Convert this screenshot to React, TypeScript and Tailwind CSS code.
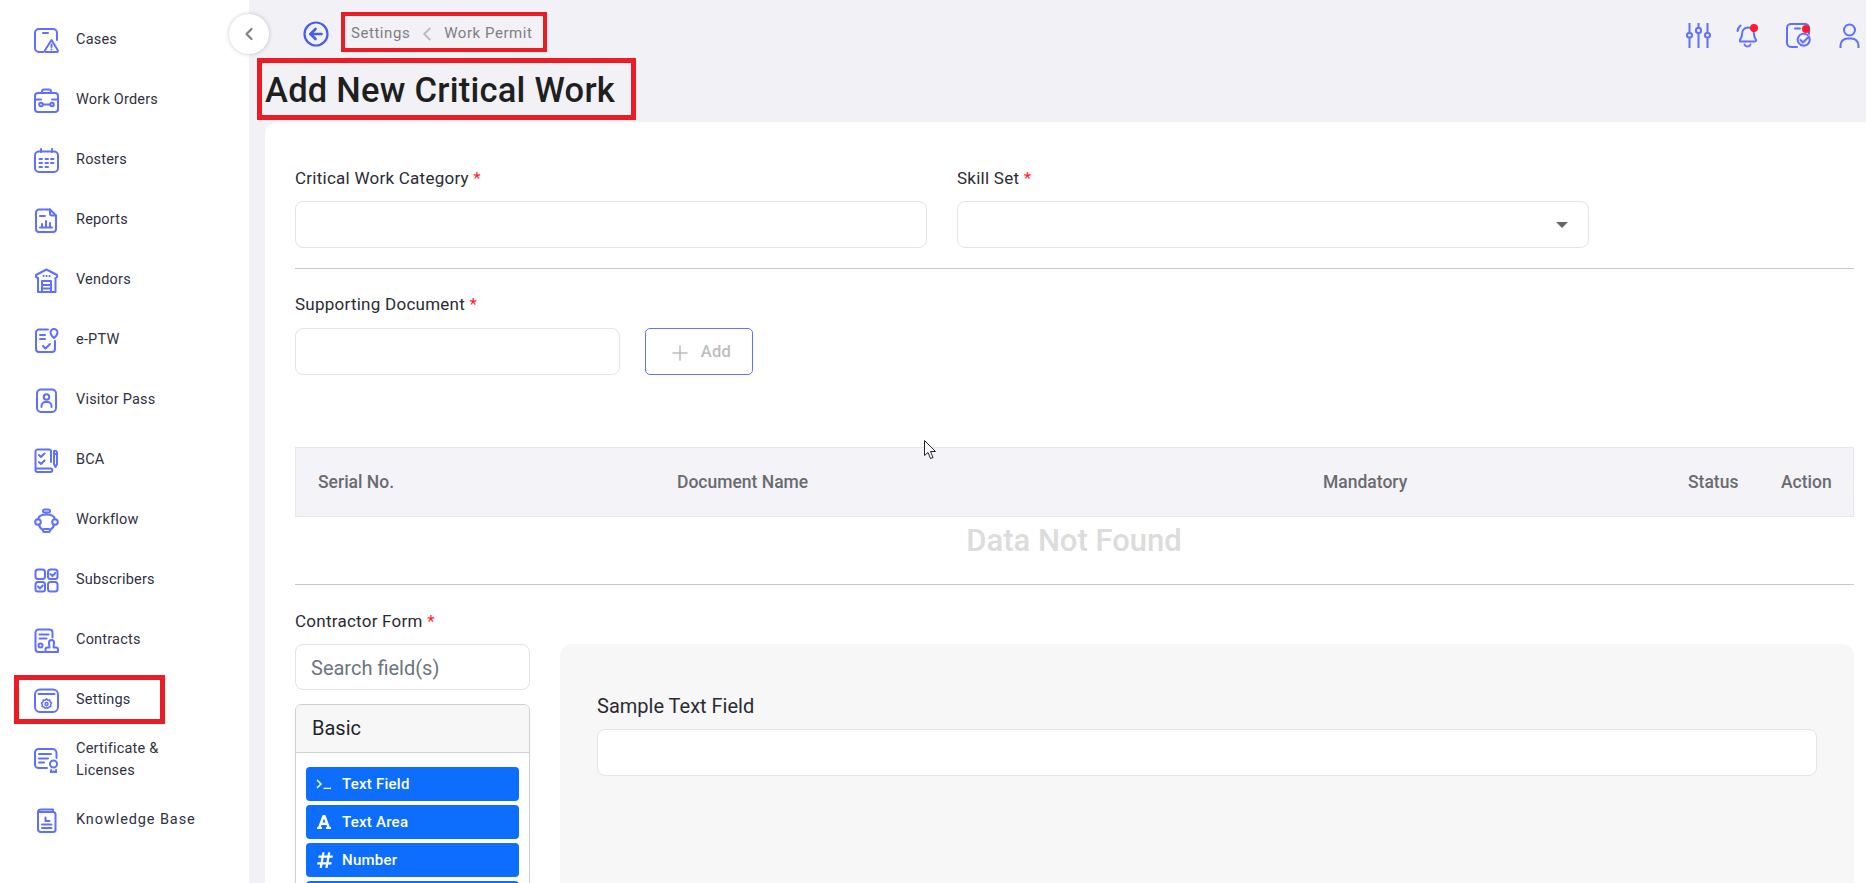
import type { ReactNode } from "react";
import { ChevronLeft, Plus } from "lucide-react";
import { FaFont, FaHashtag } from "react-icons/fa";

// all sidebar / header icons share one stroke style
function Ico({ children, className = "" }: { children: ReactNode; className?: string }) {
  return (
    <svg viewBox="0 0 25 25" fill="none" stroke="#5f6fff" strokeWidth="2" strokeLinecap="round" strokeLinejoin="round" className={"w-[25px] h-[25px] shrink-0 " + className}>
      {children}
    </svg>
  );
}

const navItems: { label: ReactNode; icon: ReactNode; active?: boolean; wide?: boolean }[] = [
  {
    label: "Cases",
    icon: (
      <>
        <path d="M9.500 24H5a4 4 0 0 1-4-4V5a4 4 0 0 1 4-4h14a4 4 0 0 1 4 4v7" />
        <path d="M9 5h5" />
        <path d="M17.500 12l6.300 10.300A1.200 1.200 0 0 1 22.800 24H12a1.200 1.200 0 0 1-1-1.700z" />
        <path d="M17.500 16.500v2.500M17.500 21.500v.1" />
      </>
    ),
  },
  {
    label: "Work Orders",
    icon: (
      <>
        <path d="M8 5V3.500A2 2 0 0 1 10 1.500h5a2 2 0 0 1 2 2V5" />
        <rect x="1" y="5" width="23" height="19" rx="3" />
        <path d="M1 11.500h6M18 11.500h6" />
        <circle cx="7" cy="16.500" r="1.800" />
        <circle cx="18" cy="16.500" r="1.800" />
        <path d="M9 16.500h7" />
      </>
    ),
  },
  {
    label: "Rosters",
    icon: (
      <>
        <rect x="1" y="3.500" width="23" height="20.500" rx="4" />
        <path d="M7 1v3M18 1v3" />
        <path d="M5.500 11h2.500M11.500 11h2.500M17 11h2.500M5.500 15h2.500M11.500 15h2.500M17 15h2.500M5.500 19h2.500M11.500 19h2.500" />
      </>
    ),
  },
  {
    label: "Reports",
    icon: (
      <>
        <path d="M16 1.500H5a3 3 0 0 0-3 3V21a3 3 0 0 0 3 3h14a3 3 0 0 0 3-3V7.500z" />
        <path d="M16 1.500v4a2 2 0 0 0 2 2h4" />
        <path d="M6 8h5M6 19.500h12M8 19v-3M12 19v-6M16 19v-4" />
      </>
    ),
  },
  {
    label: "Vendors",
    icon: (
      <>
        <path d="M2 7l10.500-5.500L23 7v2l-1.500 1v14H4V10L2 9z" />
        <path d="M8 13h9v11H8zM8 17h9M8 20.500h9" />
        <path d="M9.500 8h.2M12.500 8h.2M15.500 8h.2" />
      </>
    ),
  },
  {
    label: "e-PTW",
    icon: (
      <>
        <path d="M14 1.500H5a3 3 0 0 0-3 3V21a3 3 0 0 0 3 3h13a3 3 0 0 0 3-3v-8" />
        <path d="M20 10s-3.500-3-3.500-5.500a3.500 3.500 0 0 1 7 0C23.500 7 20 10 20 10z" />
        <path d="M6 7h5M6 11h5M9 18l2.500 2.500 4.500-4.500" />
      </>
    ),
  },
  {
    label: "Visitor Pass",
    icon: (
      <>
        <rect x="3" y="1.500" width="19" height="22.500" rx="4" />
        <circle cx="12.500" cy="9" r="2.800" />
        <path d="M7.500 19v-1a4 4 0 0 1 4-4h2a4 4 0 0 1 4 4v1" />
      </>
    ),
  },
  {
    label: "BCA",
    icon: (
      <>
        <path d="M17 14V3.500a2 2 0 0 0-2-2H3.500a2 2 0 0 0-2 2V22a2 2 0 0 0 2 2h13a1.500 1.500 0 0 0 0-3.500H3" />
        <path d="M5 7l2 2 3.500-3.500M5 14l2 2 3.500-3.500" />
        <path d="M20 3a2 2 0 0 1 3 1.500V16l-1.500 3-1.500-3z" />
        <path d="M20 6h3" />
      </>
    ),
  },
  {
    label: "Workflow",
    icon: (
      <>
        <rect x="9" y="1.500" width="7" height="3" rx="1.500" />
        <rect x="9" y="21" width="7" height="3" rx="1.500" />
        <circle cx="4" cy="14" r="2.800" />
        <circle cx="21" cy="14" r="2.800" />
        <path d="M12.500 4.500v2M4 11.200C4.500 8.500 7.500 6.500 12.500 6.500S20.500 8.500 21 11.200M5 16.800c.5 2.500 2 4.200 4 5.200M20 16.800c-.5 2.500-2 4.200-4 5.200" />
      </>
    ),
  },
  {
    label: "Subscribers",
    icon: (
      <>
        <rect x="1.500" y="1.500" width="9.500" height="9.500" rx="2.500" />
        <rect x="14" y="1.500" width="9.500" height="9.500" rx="2.500" />
        <rect x="1.500" y="14" width="9.500" height="9.500" rx="2.500" />
        <rect x="14" y="14" width="9.500" height="9.500" rx="2.500" />
        <path d="M16.500 6l2 2 2.800-3M4 18.500l2 2 2.800-3" />
      </>
    ),
  },
  {
    label: "Contracts",
    icon: (
      <>
        <path d="M10 24H4.500A3 3 0 0 1 1.500 21V4.500a3 3 0 0 1 3-3h11a3 3 0 0 1 3 3v5" />
        <path d="M5.500 6.500h9M5.500 10.500h7" />
        <circle cx="6.500" cy="17.500" r="2" />
        <path d="M17.500 12a2.500 2.500 0 0 1 2.500 2.500c0 2-.5 3.500-.5 5H22a2 2 0 0 1 2 2V24H11.500v-2.500a2 2 0 0 1 2-2H15.500c0-1.500-.5-3-.5-5A2.500 2.500 0 0 1 17.500 12z" />
      </>
    ),
  },
  {
    label: "Settings",
    active: true,
    icon: (
      <>
        <rect x="1" y="1.500" width="23" height="22.500" rx="5" />
        <path d="M4.500 6h16" />
        <path d="M12.500 10.800l1.300 1.400 1.900-.2.400 1.900 1.500 1.200-1 1.600.3 1.900-1.900.3-1.200 1.500-1.300-1.100-1.300 1.100-1.200-1.500-1.900-.3.300-1.900-1-1.600 1.500-1.200.4-1.900 1.900.2z" strokeWidth="1.500" />
        <circle cx="12.500" cy="16" r="1.500" strokeWidth="1.500" />
      </>
    ),
  },
  {
    label: (
      <>
        Certificate &amp;
        <br />
        Licenses
      </>
    ),
    icon: (
      <>
        <path d="M13 20H4.500A3.500 3.500 0 0 1 1 16.500v-12A3.500 3.500 0 0 1 4.500 1h14a4 4 0 0 1 4 4v5" />
        <path d="M5 6h12M5 10.500h9M5 14.500h5" />
        <circle cx="19.500" cy="16" r="3.500" />
        <path d="M17 22v2.500l2.500-1 2.500 1V22" />
      </>
    ),
  },
  {
    label: "Knowledge Base",
    wide: true,
    icon: (
      <>
        <path d="M19 4V1.500H7A3 3 0 0 0 4 4.500V21a3 3 0 0 0 3 3h12a2.500 2.500 0 0 0 2.500-2.500v-15A2.500 2.500 0 0 0 19 4H4.500" />
        <path d="M11.500 9.500v3.500h4M8 16.500h9.500M8 20h9.500" />
      </>
    ),
  },
];

function Sidebar() {
  return (
    <aside className="w-[249px] shrink-0 bg-white pt-[9px]">
      {navItems.map((item, i) => (
        <div key={i} className="relative h-[60px] flex items-center pl-[34px] gap-[17px] text-[14.5px] leading-[22px] tracking-[0.2px] text-[#2f3140]">
          <Ico className="mt-[2px]">{item.icon}</Ico>
          <span className={item.wide ? "mt-[1px] tracking-[0.9px]" : "mt-[1px]"}>{item.label}</span>
          {item.active && <div className="absolute left-[14px] top-[6px] w-[151px] h-[49px] border-[5px] border-[#ed1c24]" />}
        </div>
      ))}
    </aside>
  );
}

function TopIcons() {
  return (
    <div className="flex items-center self-start gap-[26px] mr-[4px] mt-[23px]">
      <Ico>
        <path d="M3.500 0v9M3.500 15.500V25M12.500 0v5M12.500 11v14M21.500 0v9M21.500 15.500V25" />
        <rect x="1" y="10" width="5" height="4.500" rx="2.200" />
        <rect x="10" y="5" width="5" height="5" rx="2.200" />
        <rect x="19" y="10" width="5" height="4.500" rx="2.200" />
      </Ico>
      <div className="relative w-[25px] h-[25px] -mx-[1px]">
        <Ico>
          <path d="M4 18.500h15c1 0 1.500-1 1-1.800-1-1.500-2-2-2-5.700 0-3.500-2.500-6.500-6-6.500s-6 3-6 6.500c0 3.700-1 4.200-2 5.700-.5.800 0 1.800 1 1.800z" />
          <path d="M8.500 21.500c1 2.500 5 2.500 6 0M1.500 8c.3-2 1.300-4 3-5.500" />
        </Ico>
        <div className="absolute left-[14px] top-[1px] w-[8px] h-[8px] rounded-full bg-[#ff1a2e]" />
      </div>
      <div className="relative w-[25px] h-[25px]">
        <Ico>
          <path d="M11 24H5a4 4 0 0 1-4-4V5a4 4 0 0 1 4-4h14a4 4 0 0 1 4 4v6" />
          <path d="M9 5.500h5" />
          <path d="M23.500 15a6 6 0 1 1-2-3M14.500 17l2.500 2.500 6-6" />
        </Ico>
        <div className="absolute left-[16px] top-[2px] w-[8px] h-[8px] rounded-full bg-[#ff1a2e]" />
      </div>
      <Ico>
        <circle cx="12.500" cy="7" r="5.500" />
        <path d="M3.500 25v-2.500a7 7 0 0 1 7-7h4a7 7 0 0 1 7 7V25" />
      </Ico>
    </div>
  );
}

function Label({ children }: { children: ReactNode }) {
  return (
    <div className="text-[17px] leading-[24px] tracking-[0.25px] text-[#2b2b33]">
      {children} <span className="text-[#ff1a2e]">*</span>
    </div>
  );
}

const inputCls = "block w-full h-[47px] bg-white border border-[#e3e3ea] rounded-[8px] outline-none";

function FieldButton({ icon, label }: { icon: ReactNode; label: string }) {
  return (
    <div className="h-[34px] flex items-center rounded-[4px] bg-[#0d6efd] pl-[10px] text-[15px] font-medium tracking-[0.25px] text-white">
      <span className="mr-[10px] w-[16px] flex items-center">{icon}</span>
      {label}
    </div>
  );
}

export default function App() {
  return (
    <div className="relative h-[883px] w-full overflow-hidden flex bg-[#f1f1f6] font-['Roboto',sans-serif]">
      <Sidebar />

      {/* collapse toggle sits over the sidebar edge */}
      <div className="absolute left-[229px] top-[14px] w-[40px] h-[40px] rounded-full bg-white shadow-[0_0_4px_rgba(0,0,0,0.22)] flex items-center justify-center z-10">
        <ChevronLeft className="w-[20px] h-[20px] text-[#808080]" strokeWidth={2.6} />
      </div>

      <main className="flex-1 min-w-0 flex flex-col">
        <header className="h-[122px] shrink-0 flex justify-between">
          <div>
            <div className="flex items-center pt-[12px] pl-[54px]">
              <svg viewBox="0 0 26 26" className="w-[26px] h-[26px] mr-[12px] mt-[4px] shrink-0" fill="none">
                <circle cx="13" cy="13" r="11.500" stroke="#4a5fe8" strokeWidth="2.200" />
                <path d="M7.500 13h11" stroke="#4a5fe8" strokeWidth="2.600" strokeLinecap="round" />
                <path d="M12.500 8l-5 5 5 5" stroke="#4a5fe8" strokeWidth="2.600" strokeLinecap="round" strokeLinejoin="round" />
              </svg>
              <div className="h-[40px] w-[206px] border-[4px] border-[#ed1c24] flex items-center pl-[6px] pt-[3px] text-[15px] tracking-[0.55px] text-[#808080] whitespace-nowrap">
                <span>Settings</span>
                <ChevronLeft className="w-[22px] h-[22px] mx-[6px] text-[#bdbdbd]" strokeWidth={2.2} />
                <span>Work Permit</span>
              </div>
            </div>
            <div className="mt-[6px] ml-[8px] h-[62px] w-[379px] border-[5px] border-[#ed1c24] flex items-center pl-[3px] pt-[4px] text-[34.500px] font-medium tracking-[0.25px] text-[#1f1f1f] whitespace-nowrap">
              Add New Critical Work
            </div>
          </div>
          <TopIcons />
        </header>

        <section className="flex-1 min-h-0 ml-[16px] bg-white rounded-tl-[12px] pl-[30px] pr-[12px] pt-[44px] overflow-hidden">
          <div className="flex gap-[30px]">
            <div className="w-[632px]">
              <Label>Critical Work Category</Label>
              <input readOnly className={inputCls + " mt-[11px]"} />
            </div>
            <div className="w-[632px]">
              <Label>Skill Set</Label>
              <div className={inputCls + " mt-[11px] flex items-center justify-end pr-[20px]"}>
                <div className="w-0 h-0 border-x-[6px] border-x-transparent border-t-[6px] border-t-[#666666]" />
              </div>
            </div>
          </div>

          <div className="mt-[20px] border-t border-[#c8c8c8]" />

          <div className="mt-[23px]">
            <Label>Supporting Document</Label>
            <div className="mt-[12px] flex gap-[25px]">
              <input readOnly className={inputCls + " !w-[325px]"} />
              <div className="w-[108px] h-[47px] flex items-center justify-center gap-[9px] pl-[1px] pt-[2px] border border-[#6273ff] rounded-[5px] text-[16.500px] font-medium tracking-[0.3px] text-[#bdbdbd]">
                <Plus className="w-[24px] h-[24px]" strokeWidth={1.6} />
                Add
              </div>
            </div>
          </div>

          <div className="relative mt-[72px] h-[70px] grid grid-cols-[359px_646px_365px_93px_1fr] items-center pl-[22px] bg-[#f3f3f8] border border-[#e6e6ec] text-[17.500px] font-medium text-[#6b6b6f]">
            <span>Serial No.</span>
            <span>Document Name</span>
            <span>Mandatory</span>
            <span>Status</span>
            <span>Action</span>
          </div>
          <div className="h-[68px] border-b border-[#c8c8c8] flex items-center justify-center pb-[19px] pr-[1px] text-[31px] font-medium text-[#dcdcdc]">
            Data Not Found
          </div>

          <div className="mt-[24px]">
            <Label>Contractor Form</Label>
            <div className="mt-[11px] flex gap-[30px]">
              <div className="w-[235px] shrink-0">
                <input readOnly placeholder="Search field(s)" className={inputCls + " !h-[46px] pl-[15px] pt-[1px] text-[20px] placeholder:text-[#6c757d]"} />
                <div className="mt-[14px] border border-[#cfcfcf] rounded-[6px] overflow-hidden">
                  <div className="h-[48px] flex items-center pl-[16px] pb-[1px] bg-[#f7f7f7] border-b border-[#cfcfcf] text-[20px] text-[#212529]">Basic</div>
                  <div className="p-[10px] flex flex-col gap-[4px] pt-[14px]">
                    <FieldButton
                      label="Text Field"
                      icon={
                        <svg viewBox="0 0 16 10" className="w-[16px] h-[10px]" fill="none" stroke="white" strokeWidth="1.500">
                          <path d="M1 1l4 4-4 4M7.500 9.500H15" />
                        </svg>
                      }
                    />
                    <FieldButton label="Text Area" icon={<FaFont className="w-[16px] h-[16px] shrink-0" />} />
                    <FieldButton label="Number" icon={<FaHashtag className="w-[18px] h-[18px] shrink-0 mr-[-2px]" />} />
                    <div className="h-[34px] rounded-[4px] bg-[#0d6efd]" />
                  </div>
                </div>
              </div>
              <div className="flex-1 h-[400px] bg-[#f7f7f7] rounded-[12px] px-[37px] pt-[50px]">
                <div className="text-[20px] leading-[24px] text-[#2b2b33]">Sample Text Field</div>
                <input readOnly className={inputCls + " mt-[11px]"} />
              </div>
            </div>
          </div>
        </section>
      </main>

      {/* mouse pointer captured in the screenshot */}
      <svg viewBox="0 0 12 19" className="absolute left-[924px] top-[440px] w-[12px] h-[19px] z-10">
        <path d="M.5.500v15l3.500-3 2.500 6 2.500-1-2.500-6h5z" fill="white" stroke="#222" strokeWidth="1" />
      </svg>
    </div>
  );
}
